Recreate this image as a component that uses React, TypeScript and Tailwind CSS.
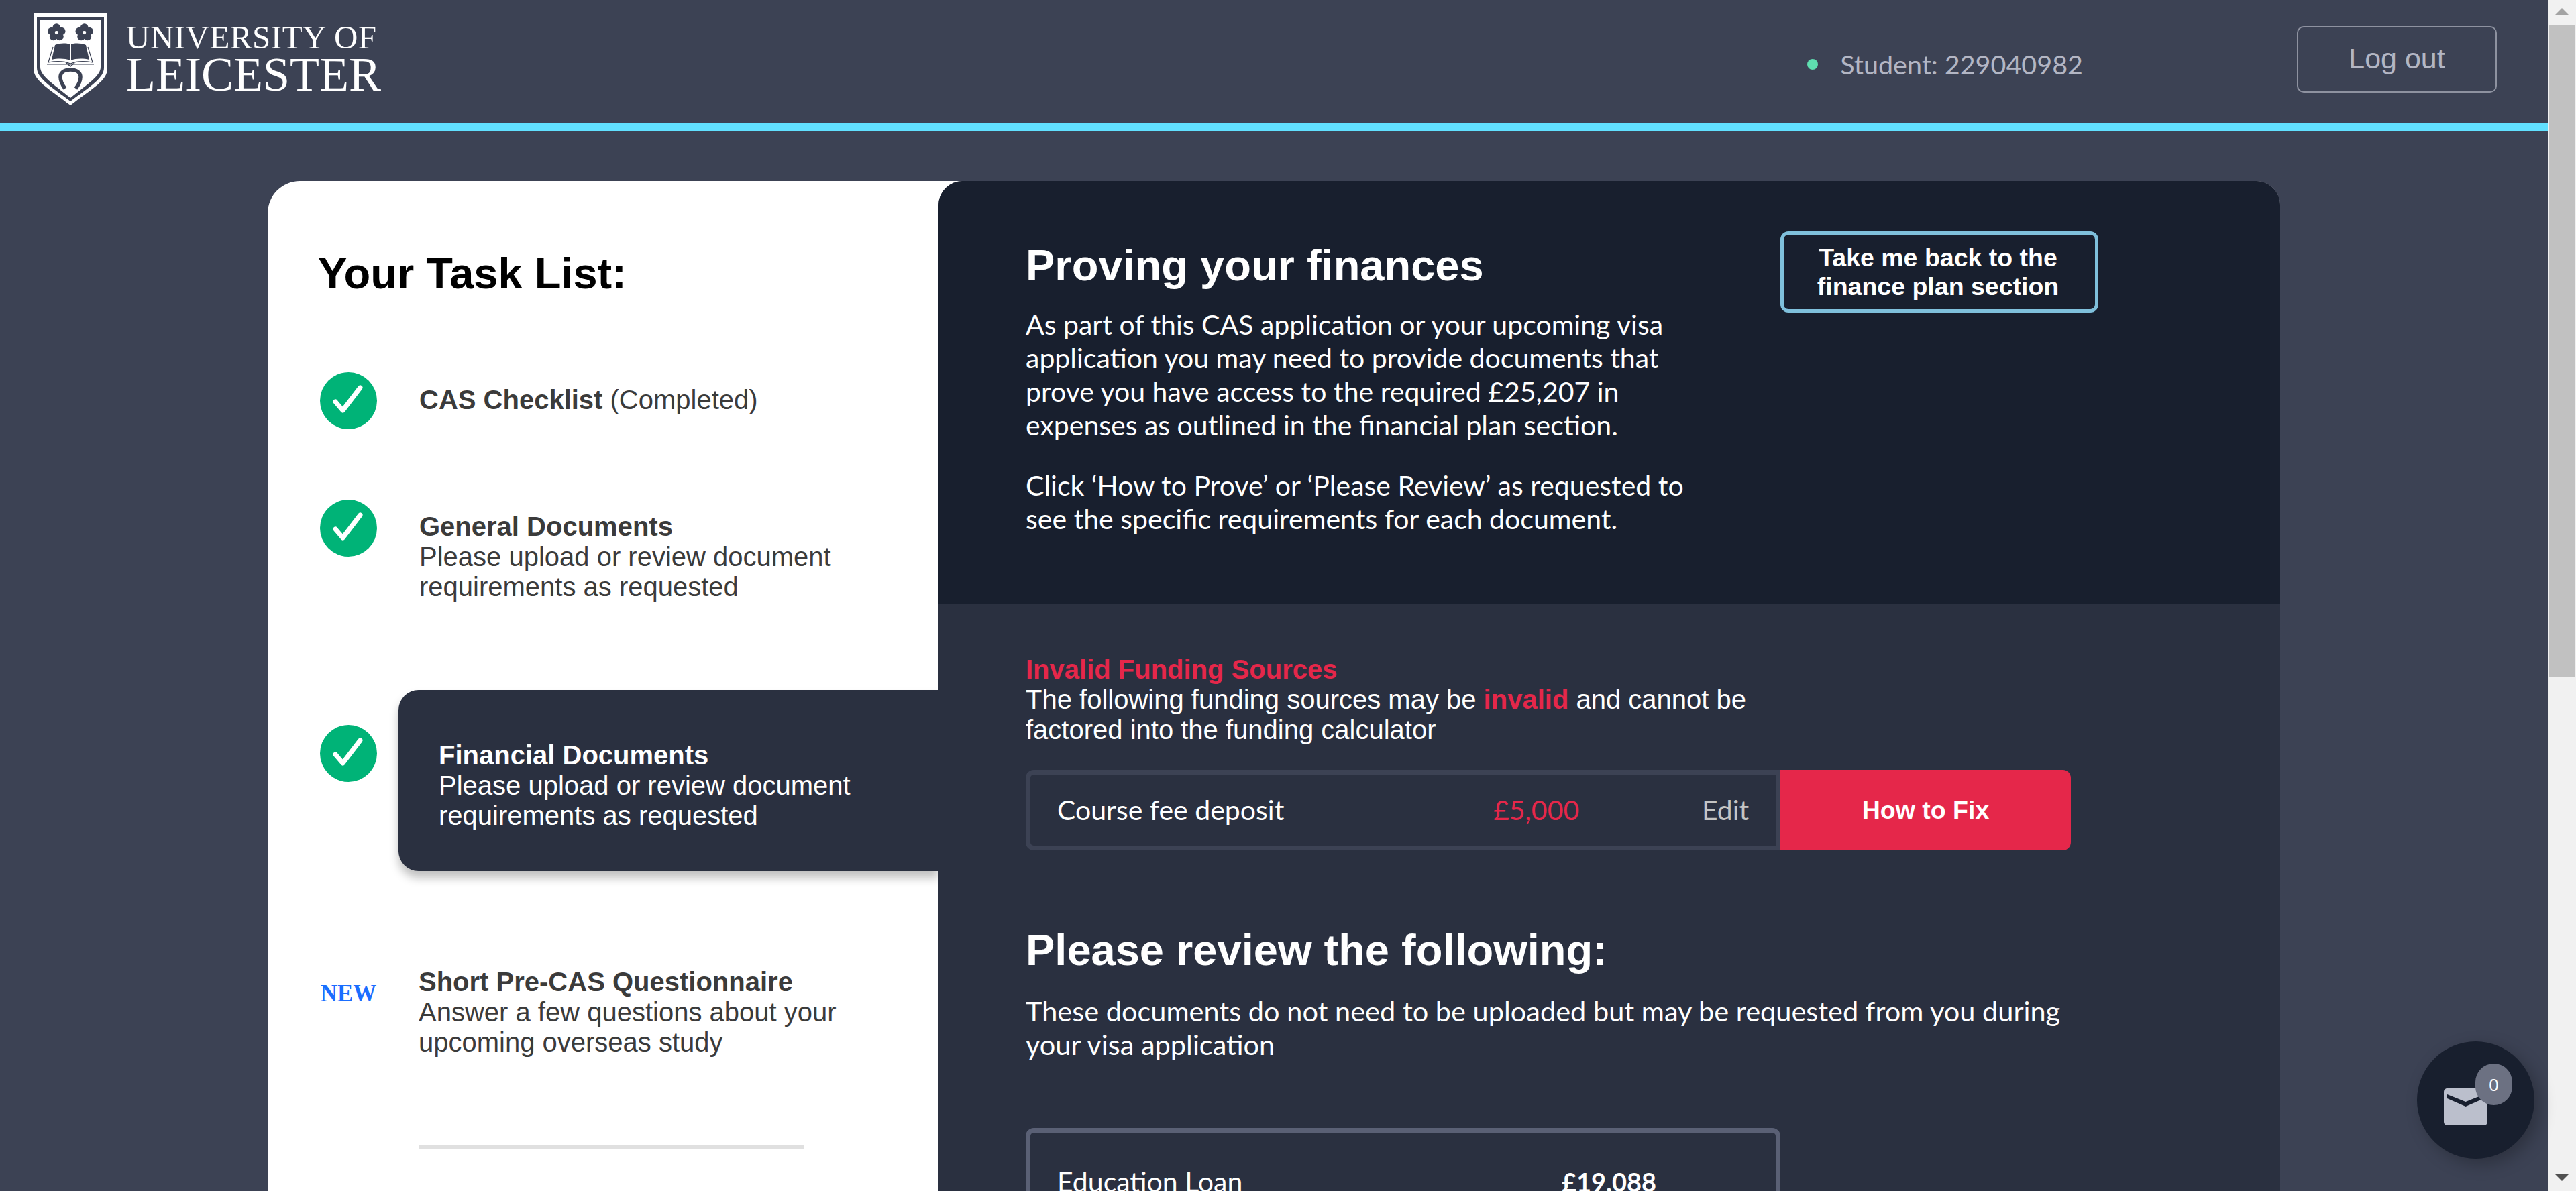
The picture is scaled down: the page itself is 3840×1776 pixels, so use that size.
import React from 'react';

const sans = "font-['Liberation_Sans',Arial,sans-serif]";
const geo = "font-['Lato','Open_Sans',sans-serif]";

const Crest = () => (
    <svg viewBox="0 0 110 137" className="w-[110px] h-[137px] shrink-0">
        <path d="M0 0H110V82C110 100 90 110 55 137C20 110 0 100 0 82Z" fill="#fff" />
        <path d="M5 5H105V81C105 96 86 108 55 131C24 108 5 96 5 81Z" fill="#3c4254" />
        <path d="M10 10H100V80C100 93 82 104 55 126C28 104 10 93 10 80Z" fill="#fff" />
        {[34.3, 75.7].map((cx) => (
            <g key={cx} fill="#3c4254">
                <circle cx={cx} cy={21} r={5.8} />
                <circle cx={cx + 7.4} cy={26.5} r={5.8} />
                <circle cx={cx + 4.6} cy={34.5} r={5.8} />
                <circle cx={cx - 4.6} cy={34.5} r={5.8} />
                <circle cx={cx - 7.4} cy={26.5} r={5.8} />
                <circle cx={cx} cy={28.5} r={2.4} fill="#fff" />
            </g>
        ))}
        <path d="M32 47C40 44 48 44 54 46V70C47 67 36 67 27 69Z" fill="#3c4254" />
        <path d="M78 47C70 44 62 44 56 46V70C63 67 74 67 83 69Z" fill="#3c4254" />
        <path d="M29 50L22 73C33 71 46 71 55 75C64 71 77 71 88 73L81 50" fill="none" stroke="#3c4254" strokeWidth="1.2" />
        <path d="M20 76H90" stroke="#3c4254" strokeWidth="1" />
        <path d="M49 74L55 79L61 74" fill="none" stroke="#3c4254" strokeWidth="1.5" />
        <path d="M47 112C41 104 40 98 40 95C40 87 47 84 55 84C63 84 70 87 70 95C70 98 69 104 63 112" fill="none" stroke="#3c4254" strokeWidth="5.5" />
    </svg>
);

const Check = () => (
    <svg viewBox="0 0 85 85" className="w-[85px] h-[85px] shrink-0">
        <circle cx="42.5" cy="42.5" r="42.5" fill="#00b377" />
        <path d="M23 44L34 57L60 23" fill="none" stroke="#fff" strokeWidth="7" strokeLinecap="round" strokeLinejoin="round" />
    </svg>
);

const Task = ({ title, body, className }: { title: string; body: string; className?: string }) => (
    <div className={`text-[40px] leading-[45px] text-[#3b3b3b] w-[640px] ${className ?? ''}`}>
        <div className="font-bold">{title}</div>
        <div>{body}</div>
    </div>
);

export default function App() {
    return (
        <div className={`flex h-[1776px] overflow-hidden bg-[#3c4254] ${sans}`}>
            <div className="relative w-[3798px] shrink-0">
                {/* Header */}
                <header className="flex items-start h-[195px] border-b-[12px] border-[#61e0ff] pl-[50px] pr-[76px]">
                    <div className="flex items-start pt-5">
                        <Crest />
                        <div className="ml-7 pt-[12px] font-['Liberation_Serif',serif] text-white">
                            <div className="text-[49px] leading-[48px] tracking-[0.5px]">UNIVERSITY OF</div>
                            <div className="text-[72px] leading-[62px]">LEICESTER</div>
                        </div>
                    </div>
                    <div className={`ml-auto flex items-center mt-[74px] text-[39.5px] leading-[44px] text-[#b3b6c4] ${geo}`}>
                        <span className="w-4 h-4 rounded-full bg-[#5fdfb0] mr-[33px]" />
                        Student: 229040982
                    </div>
                    <button className="ml-[319px] mt-[39px] w-[298px] h-[99px] pb-[3px] rounded-[10px] border-2 border-[#8e92a0] text-[43px] text-[#b3b6c4]">
                        Log out
                    </button>
                </header>

                {/* Card */}
                <div className="flex w-[3000px] ml-[399px] mt-[75px] bg-white rounded-tl-[48px] rounded-tr-[36px] overflow-hidden">
                    {/* Task list */}
                    <aside className="w-[1000px] h-[1600px] shrink-0">
                        <h2 className="ml-[75px] mt-[100px] text-[65px] leading-[76px] font-bold text-black">Your Task List:</h2>
                        <div className="flex items-center ml-[78px] mt-[109px]">
                            <Check />
                            <div className="ml-[63px] -mt-[2px] text-[40px] leading-[45px] text-[#3b3b3b]">
                                <b>CAS Checklist</b> (Completed)
                            </div>
                        </div>
                        <div className="flex items-start ml-[78px] mt-[105px]">
                            <Check />
                            <Task className="ml-[63px] mt-[18px]" title="General Documents" body="Please upload or review document requirements as requested" />
                        </div>
                        <div className="flex items-start ml-[78px] mt-[183px]">
                            <Check />
                            <div className="ml-[32px] -mt-[52px] w-[805px] h-[270px] pl-[60px] pt-[75px] rounded-l-[30px] bg-[#2a3040] shadow-[0_10px_14px_rgba(0,0,0,0.25)] text-[40px] leading-[45px] text-white">
                                <div className="font-bold">Financial Documents</div>
                                <div className="w-[640px]">Please upload or review document requirements as requested</div>
                            </div>
                        </div>
                        <div className="flex items-start ml-[78px] mt-[143px]">
                            <div className="w-[85px] mt-[20px] text-center font-['Liberation_Serif',serif] font-bold text-[35px] leading-[40px] text-[#1a6eff]">NEW</div>
                            <Task className="ml-[62px]" title="Short Pre-CAS Questionnaire" body="Answer a few questions about your upcoming overseas study" />
                        </div>
                        <div className="ml-[225px] mt-[131px] w-[574px] h-[5px] bg-[#e0e0e0]" />
                    </aside>

                    {/* Finances */}
                    <section className="w-[2000px] shrink-0 bg-[#2a3040] rounded-tl-[36px] overflow-hidden text-white">
                        <div className="flex h-[630px] bg-[#181f2e] pl-[130px]">
                            <div className="w-[1000px]">
                                <h2 className="mt-[88px] text-[65px] leading-[76px] font-bold">Proving your finances</h2>
                                <p className={`mt-[25px] text-[41px] leading-[50px] ${geo}`}>
                                    As part of this CAS application or your upcoming visa application you may need to provide documents that prove you have access to the required £25,207 in expenses as outlined in the financial plan section.
                                </p>
                                <p className={`mt-[40px] text-[41px] leading-[50px] ${geo}`}>
                                    Click ‘How to Prove’ or ‘Please Review’ as requested to see the specific requirements for each document.
                                </p>
                            </div>
                            <button className="ml-[125px] mt-[75px] w-[474px] h-[121px] pr-[4px] rounded-[12px] border-[5px] border-[#7fc0dc] text-[37.5px] leading-[43px] font-bold">
                                Take me back to the<br />finance plan section
                            </button>
                        </div>

                        <div className="pl-[130px] pt-[76px]">
                            <div className="w-[1200px] text-[40px] leading-[45px]">
                                <div className="font-bold text-[#e5274a]">Invalid Funding Sources</div>
                                The following funding sources may be <b className="text-[#e5274a]">invalid</b> and cannot be factored into the funding calculator
                            </div>
                            <div className="flex mt-[37px] h-[120px]">
                                <div className={`flex items-center w-[1125px] pl-[40px] border-[7px] border-[#3c4254] rounded-l-[12px] text-[41px] ${geo}`}>
                                    <span className="w-[650px]">Course fee deposit</span>
                                    <span className="w-[311px] text-[#e5274a]">£5,000</span>
                                    <span className="text-[#c4c4c4]">Edit</span>
                                </div>
                                <button className="w-[433px] rounded-r-[12px] bg-[#e5274a] text-[37.5px] font-bold">How to Fix</button>
                            </div>
                            <h2 className="mt-[111px] text-[65px] leading-[76px] font-bold">Please review the following:</h2>
                            <p className={`mt-[27px] w-[1580px] text-[41.5px] leading-[50px] ${geo}`}>
                                These documents do not need to be uploaded but may be requested from you during your visa application
                            </p>
                            <div className={`flex mt-[100px] w-[1125px] h-[200px] pl-[40px] pt-[43px] border-[7px] border-[#5a6075] rounded-[12px] text-[41px] leading-[60px] ${geo}`}>
                                <span className="w-[752px]">Education Loan</span>
                                <span className="font-bold text-[38px]">£19,088</span>
                            </div>
                        </div>
                    </section>
                </div>

                {/* Messages bubble */}
                <div className="absolute left-[3603px] top-[1553px] w-[175px] h-[175px] rounded-full bg-[#181f2e] shadow-[8px_8px_24px_rgba(0,0,0,0.25)]">
                    <svg viewBox="0 0 65 55" className="absolute left-10 top-[70px] w-[65px] h-[55px]">
                        <rect width="65" height="55" rx="5" fill="#bbbfcc" />
                        <path d="M5 9L32.5 20L60 9V15L32.5 27L5 15Z" fill="#181f2e" />
                    </svg>
                    <div className="absolute left-[87px] top-[33px] flex items-center justify-center w-[55px] h-[62px] rounded-full bg-[#6c7182] text-[26px] text-white font-['Open_Sans',sans-serif]">0</div>
                </div>
            </div>

            {/* Scrollbar */}
            <div className="flex flex-col w-[42px] shrink-0 bg-[#f1f1f1]">
                <div className="flex justify-center pt-[12px] h-[37px]">
                    <div className="w-0 h-0 border-x-[10px] border-x-transparent border-b-[10px] border-b-[#a3a3a3]" />
                </div>
                <div className="mx-[2px] h-[972px] bg-[#c1c1c1]" />
                <div className="flex justify-center mt-auto pb-[15px]">
                    <div className="w-0 h-0 border-x-[10px] border-x-transparent border-t-[10px] border-t-[#505050]" />
                </div>
            </div>
        </div>
    );
}
